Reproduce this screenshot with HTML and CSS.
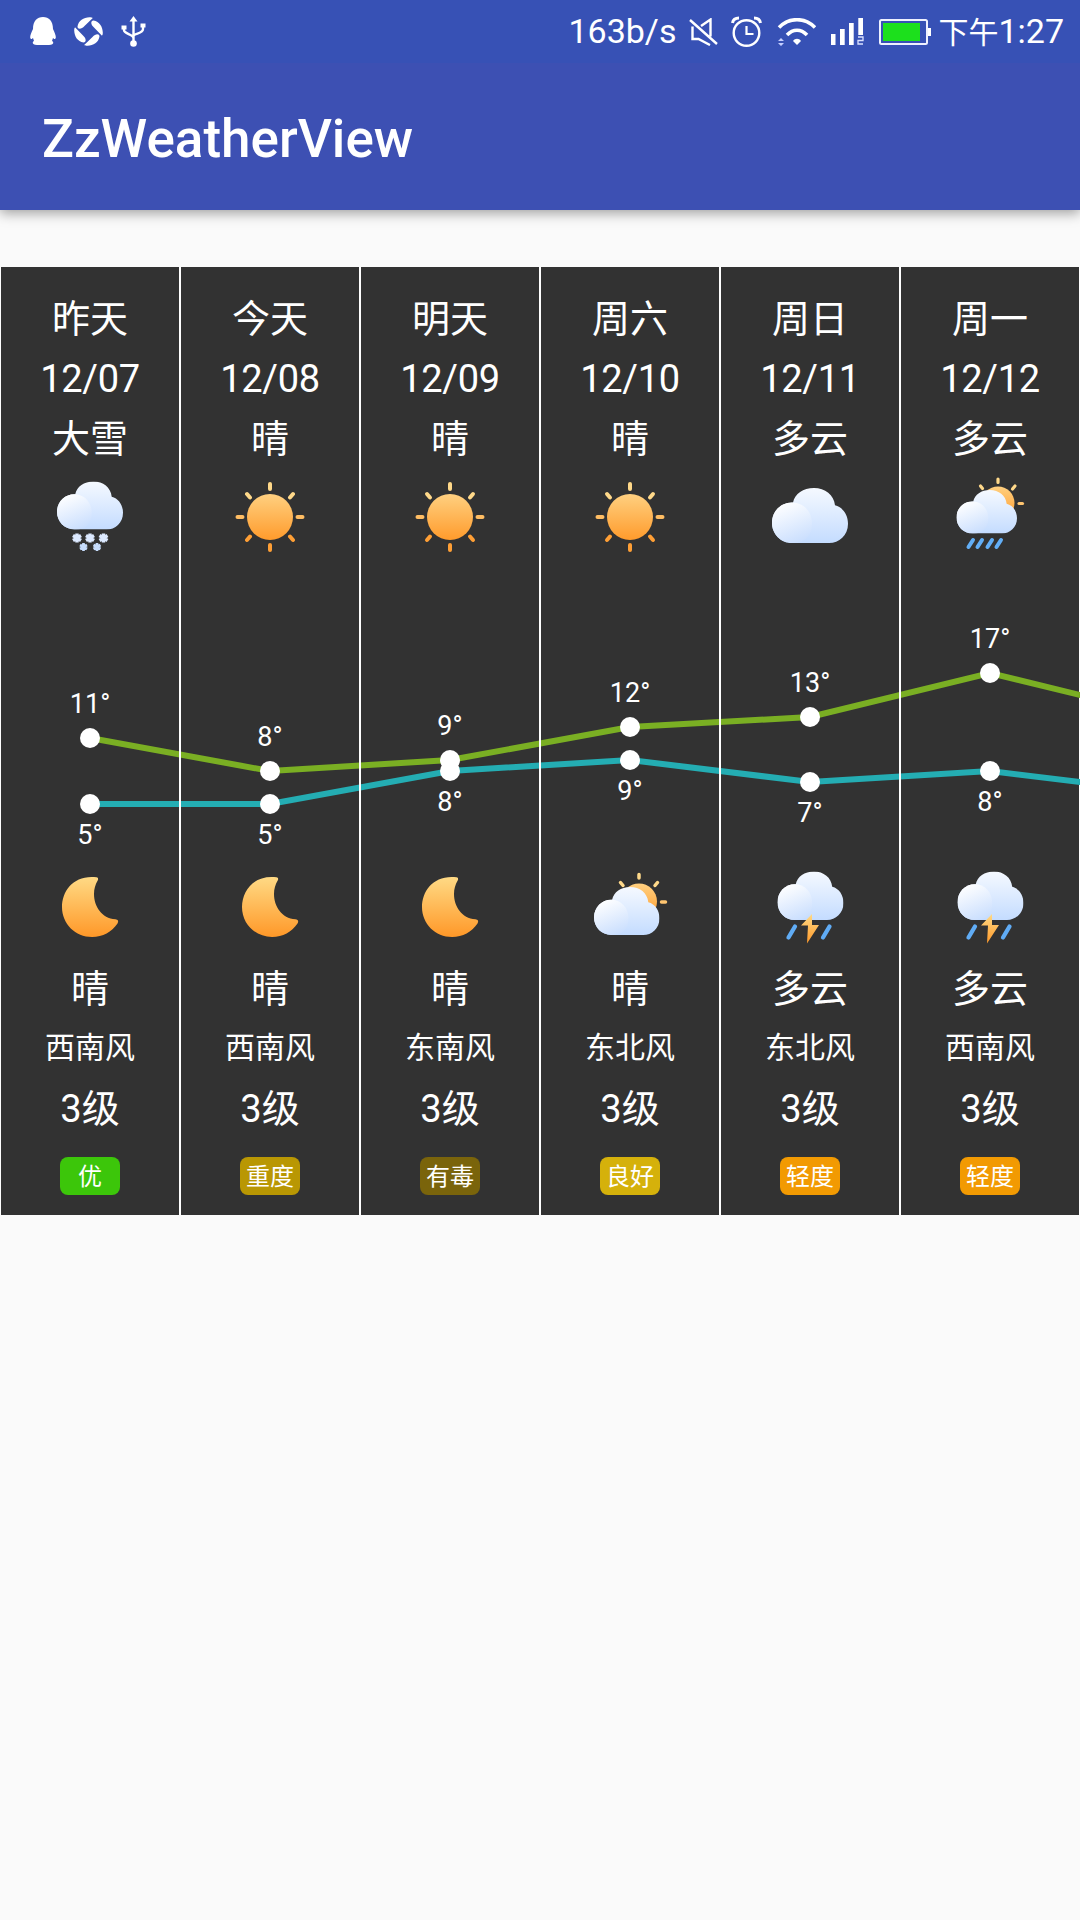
FILE: index.html
```html
<!DOCTYPE html>
<html lang="zh-CN">
<head>
<meta charset="utf-8">
<title>ZzWeatherView</title>
<link rel="stylesheet" href="styles.css">
</head>
<body>
<svg class="defs" width="0" height="0">
  <defs>
    <linearGradient id="gold" x1="0" y1="0" x2="0" y2="1"><stop offset="0" stop-color="#ffda85"/><stop offset="1" stop-color="#ff9828"/></linearGradient>
    <linearGradient id="disc" x1="0" y1="0" x2="0" y2="1"><stop offset="0" stop-color="#ffd080"/><stop offset="1" stop-color="#ff9b2c"/></linearGradient>
    <linearGradient id="back" x1="0" y1="0" x2="0" y2="1"><stop offset="0" stop-color="#f5f9ff"/><stop offset="1" stop-color="#c4dcff"/></linearGradient>
    <linearGradient id="front" x1=".3" y1="0" x2=".7" y2="1"><stop offset="0" stop-color="#ffffff"/><stop offset="1" stop-color="#c9defe"/></linearGradient>
    <symbol id="cloud" viewBox="0 0 76 57" preserveAspectRatio="none">
      <path d="M20 57C9 57 0 48 0 36S9 15 20 15h1C23 6 31 0 42 0c11 0 20 7 21 18 8 2 13 10 13 19 0 12-9 20-19 20z" fill="url(#back)"/>
      <path d="M20 57C9 57 0 48 0 36S9 15 20 15s20 9 20 22-8 20-18 20z" fill="url(#front)"/>
    </symbol>
    <symbol id="sun" viewBox="0 0 90 90">
      <circle cx="45" cy="45" r="23" fill="url(#disc)"/>
      <g stroke-width="4" stroke-linecap="round">
        <path d="M45 12v5M22 22l3 3.500M68 22l-3 3.500" stroke="#ffd98a"/>
        <path d="M12.500 45h5M72.500 45h5" stroke="#ffbd63"/>
        <path d="M22 68l3-3.500M68 68l-3-3.500M45 73v5" stroke="#ff9f35"/>
      </g>
    </symbol>
    <symbol id="cloud-day" viewBox="0 0 90 90">
      <g transform="translate(0 8.500)">
      <circle cx="54" cy="31" r="18" fill="url(#disc)"/>
      <g stroke-width="3.500" stroke-linecap="round" stroke="#ffd98a">
        <path d="M54 4v3.500M35.500 12l2.500 3M72.500 12l-2.500 3"/><path d="M76.500 31.500h4" stroke="#ffc570"/>
      </g>
      <use href="#cloud" x="9" y="16.500" width="65.500" height="48"/>
      </g>
    </symbol>
    <symbol id="snow" viewBox="0 0 90 90">
      <use href="#cloud" x="12" y="9.500" width="66" height="48"/>
      <g stroke="#dce9ff" stroke-width="3.400">
        <path d="M32 61.500v9M28 63.500l8 5M28 68.500l8-5"/><path d="M45 61.500v9M41 63.500l8 5M41 68.500l8-5"/><path d="M58.500 61.500v9M54.500 63.500l8 5M54.500 68.500l8-5"/>
        <path d="M38.500 71v8M35 73l7 4M35 77l7-4M52 71v8M48.500 73l7 4M48.500 77l7-4" stroke="#c6dcfc" stroke-width="2.700"/>
      </g>
    </symbol>
    <symbol id="cloudy" viewBox="0 0 90 90">
      <use href="#cloud" x="7" y="16" width="76" height="55"/>
    </symbol>
    <symbol id="sun-shower" viewBox="0 0 90 90">
      <circle cx="53" cy="31" r="16.500" fill="url(#disc)"/>
      <g stroke-width="3.200" stroke-linecap="round" stroke="#ffd98a">
        <path d="M53 7v3.500M35.500 14l2 2.500M70 14l-2.500 3"/><path d="M74 31.500h3.500" stroke="#ffc570"/>
      </g>
      <use href="#cloud" x="11.500" y="18" width="60.500" height="43.500"/>
      <path d="M28 68l-4.500 7M37 68l-4.500 7M47 68l-4.500 7M56 68l-4.500 7" stroke="#62aef6" stroke-width="4" stroke-linecap="round"/>
    </symbol>
    <symbol id="storm" viewBox="0 0 90 90">
      <use href="#cloud" x="12.500" y="9.500" width="66" height="48.500"/>
      <path d="M47 52L36 63.500h7L42 81.500 54 63h-7z" fill="url(#gold)"/>
      <path d="M30 64.500l-6.500 11M64.500 64.500l-6.500 11" stroke="#60acf5" stroke-width="4.300" stroke-linecap="round"/>
    </symbol>
    <symbol id="moon" viewBox="0 0 90 90">
      <path d="M51.500 15.200C29 12.500 17 28.500 17 45c0 17 13.500 30 30 30 11 0 19.500-5 25.500-13.500 1.500-2.500.3-4-2-4.200C56.500 56.500 49 44 49 32c0-5 1.300-9.500 3.700-13.500 1-2 .2-3-1.200-3.300z" fill="url(#gold)"/>
    </symbol>
  </defs>
</svg>

<header>
  <div class="status">
    <div class="notices">
      <svg width="26" height="29" viewBox="0 0 26 29" fill="#fff"><path d="M3 12C3 4 7 0 13 0s10 4 10 12c2 4 4 9 2 10-1 .5-1.500-1-2-1l-1 3c2 1 2 4-3 4H7c-5 0-5-3-3-4l-1-3c-.5 0-1 1.500-2 1-2-1 0-6 2-10z"/></svg>
      <svg width="29" height="29" viewBox="-14.500 -14.500 29 29" fill="#fff"><path id="blade" d="M-11-5C-10-11-5-14 1-14.300c3 0 4 .8 2 2L-4-5.500C-7-2-11-2-11-5z"/><use href="#blade" transform="rotate(90)"/><use href="#blade" transform="rotate(180)"/><use href="#blade" transform="rotate(270)"/></svg>
      <svg width="25" height="31" viewBox="0 0 25 31" fill="none" stroke="#fff" stroke-width="2.400"><path d="M12.500 3v24M3 11v3c0 4 9 4 9.500 8M22 9v4c0 5-9 4-9.500 7"/><path d="M12.500 0l4 5.500h-8zM.5 9.500h5v4h-5zM19.500 7.500h5v4h-5z" fill="#fff" stroke="none"/><circle cx="12.500" cy="27.500" r="3.300" fill="#fff" stroke="none"/></svg>
    </div>
    <div class="system">
      <span class="speed">163b/s</span>
      <svg class="mute" width="29" height="28" viewBox="0 0 29 28" fill="none" stroke="#fff" stroke-width="2.400"><path d="M1 2l27 24M12 8l9.500-6.500v17M3.500 8.500V21h6l11.500 6"/></svg>
      <svg width="31" height="31" viewBox="0 0 31 31" fill="none" stroke="#fff"><circle cx="15.500" cy="17" r="12.800" stroke-width="2.400"/><path d="M15.500 10v8h7" stroke-width="2.200"/><path d="M1.500 7C2 4 4 2 8 2M29.500 7C29 4 27 2 23 2" stroke-width="3"/></svg>
      <svg width="39" height="28" viewBox="0 0 39 28" fill="none" stroke="#fff" stroke-width="3.500"><path d="M2 9.500C12-1 28-1 38 9.500M10 17c6-6.500 14-6.500 20 0"/><path d="M16 23c2-3 6-3 8 0l-4 4z" fill="#fff" stroke="none"/><path d="M1 23l3-3 3 3zM1 25h6l-3 3z" fill="#c6cfff" stroke="none"/></svg>
      <svg width="33" height="27" viewBox="0 0 33 27" fill="#fff"><path d="M0 16h4.500v11H0zM9 11h4.700v16H9zM18 5h4.700v22H18zM27.300 0H32v17h-4.700z"/><path d="M27 19h5v3.500h-5V26h5" fill="none" stroke="#dce2ff" stroke-width="1.300"/></svg>
      <svg width="52" height="26" viewBox="0 0 52 26"><rect x="1" y="1" width="47" height="24" rx="1.500" fill="none" stroke="#eef1ff" stroke-width="2"/><path d="M49 9h3v8h-3z" fill="#fff"/><path d="M4 4h37v18H4z" fill="#1ce01c"/></svg>
      <span class="clock"><span class="period">下午</span>1:27</span>
    </div>
  </div>
  <h1>ZzWeatherView</h1>
</header>

<main class="forecast">
  <section class="day"><p>昨天</p><p class="date">12/07</p><p>大雪</p><svg class="icon"><use href="#snow"/></svg><div class="gap"></div><svg class="icon"><use href="#moon"/></svg><p class="night">晴</p><p class="wind">西南风</p><p>3级</p><span class="air good">优</span></section>
  <section class="day"><p>今天</p><p class="date">12/08</p><p>晴</p><svg class="icon"><use href="#sun"/></svg><div class="gap"></div><svg class="icon"><use href="#moon"/></svg><p class="night">晴</p><p class="wind">西南风</p><p>3级</p><span class="air heavy">重度</span></section>
  <section class="day"><p>明天</p><p class="date">12/09</p><p>晴</p><svg class="icon"><use href="#sun"/></svg><div class="gap"></div><svg class="icon"><use href="#moon"/></svg><p class="night">晴</p><p class="wind">东南风</p><p>3级</p><span class="air toxic">有毒</span></section>
  <section class="day"><p>周六</p><p class="date">12/10</p><p>晴</p><svg class="icon"><use href="#sun"/></svg><div class="gap"></div><svg class="icon"><use href="#cloud-day"/></svg><p class="night">晴</p><p class="wind">东北风</p><p>3级</p><span class="air fair">良好</span></section>
  <section class="day"><p>周日</p><p class="date">12/11</p><p>多云</p><svg class="icon"><use href="#cloudy"/></svg><div class="gap"></div><svg class="icon"><use href="#storm"/></svg><p class="night">多云</p><p class="wind">东北风</p><p>3级</p><span class="air light">轻度</span></section>
  <section class="day"><p>周一</p><p class="date">12/12</p><p>多云</p><svg class="icon"><use href="#sun-shower"/></svg><div class="gap"></div><svg class="icon"><use href="#storm"/></svg><p class="night">多云</p><p class="wind">西南风</p><p>3级</p><span class="air light">轻度</span></section>

  <svg class="chart" viewBox="0 620 1080 240">
    <polyline class="high" points="90,738 270,771 450,760 630,727 810,717 990,673 1170,717"/>
    <polyline class="low" points="90,804 270,804 450,771 630,760 810,782 990,771 1170,793"/>
    <path class="rules" d="M180 620v240M360 620v240M540 620v240M720 620v240M900 620v240"/>
    <g fill="#fff">
      <circle cx="90" cy="738" r="10"/><circle cx="270" cy="771" r="10"/><circle cx="450" cy="760" r="10"/><circle cx="630" cy="727" r="10"/><circle cx="810" cy="717" r="10"/><circle cx="990" cy="673" r="10"/>
      <circle cx="90" cy="804" r="10"/><circle cx="270" cy="804" r="10"/><circle cx="450" cy="771" r="10"/><circle cx="630" cy="760" r="10"/><circle cx="810" cy="782" r="10"/><circle cx="990" cy="771" r="10"/>
    </g>
    <g class="temps">
      <text x="90" y="713">11°</text><text x="270" y="746">8°</text><text x="450" y="735">9°</text><text x="630" y="702">12°</text><text x="810" y="692">13°</text><text x="990" y="648">17°</text>
      <text x="90" y="844">5°</text><text x="270" y="844">5°</text><text x="450" y="811">8°</text><text x="630" y="800">9°</text><text x="810" y="822">7°</text><text x="990" y="811">8°</text>
    </g>
  </svg>
</main>
</body>
</html>
```

FILE: styles.css
```css
* { box-sizing: border-box; }
body {
  margin: 0;
  height: 1920px;
  background: #fafafa;
  color: #fff;
  font-family: Roboto, "Noto Sans CJK SC", sans-serif;
  overflow: hidden;
}
.defs { position: absolute; }
header {
  height: 210px;
  background: #3d50b3;
  box-shadow: 0 3px 12px rgba(0, 0, 0, .38);
}
.status {
  height: 63px;
  background: #3751b5;
  display: flex;
  justify-content: space-between;
  padding: 0 16px 0 30px;
  font-size: 34px;
  line-height: 63px;
}
.notices, .system { display: flex; align-items: center; }
.notices { gap: 18px; }
.system { gap: 15px; }
.status span { white-space: nowrap; }
.speed { margin-right: -2px; }
.mute { margin-right: -2px; }
.clock { margin-left: -8px; }
.period { font-size: 30px; }
h1 {
  margin: 0;
  padding-left: 42px;
  font-size: 53px;
  font-weight: 500;
  line-height: 152px;
}
.forecast {
  position: relative;
  display: grid;
  grid-template-columns: repeat(6, 180px);
  height: 948px;
  margin-top: 57px;
}
.day {
  display: flex;
  flex-direction: column;
  align-items: center;
  padding-top: 22px;
  background: #323232;
  border: solid #fff;
  border-width: 0 1px;
}
.day p {
  margin: 0;
  height: 60px;
  font-size: 38px;
  line-height: 60px;
  white-space: nowrap;
}
.day .date { letter-spacing: -.3px; }
.icon { width: 90px; height: 90px; margin-top: 3px; }
.gap { height: 297px; }
.day .night { margin-top: 7px; }
.day .wind { font-size: 30px; line-height: 58px; }
.air {
  width: 60px;
  height: 38px;
  margin-top: 18px;
  border-radius: 8px;
  font-size: 24px;
  line-height: 40px;
  text-align: center;
}
.good { background: #3cc60a; }
.heavy { background: #b99703; }
.toxic { background: #7a640b; }
.fair { background: #d5b10b; }
.light { background: #f29a02; }
.chart {
  position: absolute;
  left: 0;
  top: 353px;
  width: 1080px;
  height: 240px;
}
.high, .low { fill: none; stroke-width: 6; }
.high { stroke: #7aaf23; }
.low { stroke: #24adb3; }
.rules { stroke: #fff; stroke-width: 2; }
.temps {
  fill: #fff;
  font-size: 27px;
  text-anchor: middle;
}
```
